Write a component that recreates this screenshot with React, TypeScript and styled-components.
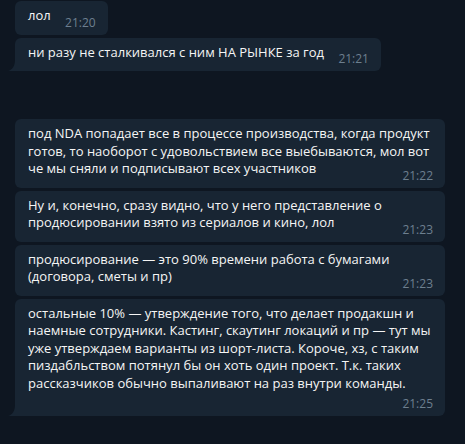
import React from 'react';
import styled, { createGlobalStyle } from 'styled-components';

const GlobalStyle = createGlobalStyle`
  html, body {
    margin: 0;
    padding: 0;
    background: #0e1621;
  }
  body {
    font-family: "Open Sans", "Liberation Sans", sans-serif;
    -webkit-font-smoothing: antialiased;
  }
`;

const Chat = styled.div`
  width: 465px;
  height: 444px;
  box-sizing: border-box;
  padding: 1px 20px 0 15px;
  background: #0e1621;
  display: flex;
  flex-direction: column;
  gap: 48px;
  overflow: hidden;
`;

const Group = styled.div`
  display: flex;
  flex-direction: column;
  align-items: flex-start;
  gap: 3px;
`;

const Bubble = styled.div<{ $last?: boolean }>`
  position: relative;
  display: flow-root;
  max-width: 430px;
  box-sizing: border-box;
  padding: 6px 12px 10px 13px;
  background: #182533;
  border-radius: ${p => (p.$last ? '6px 6px 6px 0' : '6px')};
  color: #f5f5f5;
  font-size: 13px;
  line-height: 17.5px;
`;

const Tail = styled.svg`
  position: absolute;
  left: -7px;
  bottom: 0;
  width: 7px;
  height: 11px;
  fill: #182533;
`;

// keeps room for the time on the last line, or drops below it
const TimeSpacer = styled.span`
  float: right;
  width: 45px;
  height: 13.5px;
`;

const Time = styled.span`
  position: absolute;
  right: 12px;
  bottom: 4px;
  font-size: 12px;
  line-height: 16px;
  color: #6d7f8f;
`;

interface Message {
  id: number;
  text: string;
  time: string;
}

const groups: Message[][] = [
  [
    { id: 1, text: 'лол', time: '21:20' },
    { id: 2, text: 'ни разу не сталкивался с ним НА РЫНКЕ за год', time: '21:21' },
  ],
  [
    {
      id: 3,
      text: 'под NDA попадает все в процессе производства, когда продукт готов, то наоборот с удовольствием все выебываются, мол вот че мы сняли и подписывают всех участников',
      time: '21:22',
    },
    {
      id: 4,
      text: 'Ну и, конечно, сразу видно, что у него представление о продюсировании взято из сериалов и кино, лол',
      time: '21:23',
    },
    {
      id: 5,
      text: 'продюсирование — это 90% времени работа с бумагами (договора, сметы и пр)',
      time: '21:23',
    },
    {
      id: 6,
      text: 'остальные 10% — утверждение того, что делает продакшн и наемные сотрудники. Кастинг, скаутинг локаций и пр — тут мы уже утверждаем варианты из шорт-листа. Короче, хз, с таким пиздабльством потянул бы он хоть один проект. Т.к. таких рассказчиков обычно выпаливают на раз внутри команды.',
      time: '21:25',
    },
  ],
];

const App: React.FC = () => {
  return (
    <>
      <GlobalStyle />
      <Chat>
        {groups.map((group, gi) => (
          <Group key={gi}>
            {group.map((msg, i) => {
              const last = i === group.length - 1;
              return (
                <Bubble key={msg.id} $last={last}>
                  {msg.text}
                  <TimeSpacer />
                  <Time>{msg.time}</Time>
                  {last && (
                    <Tail viewBox="0 0 7 11">
                      <path d="M7 0 C7 6 4.5 9.8 0 11 L7 11 Z" />
                    </Tail>
                  )}
                </Bubble>
              );
            })}
          </Group>
        ))}
      </Chat>
    </>
  );
};

export default App;
